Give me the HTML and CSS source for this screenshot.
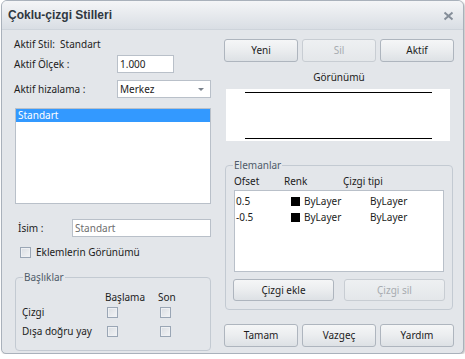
FILE: index.html
```html
<!DOCTYPE html>
<html lang="tr">
<head>
    <meta charset="UTF-8">
    <title>Çoklu-çizgi Stilleri</title>
    <link rel="stylesheet" href="styles.css">
</head>
<body>
    <div class="window">
        <div class="titlebar">
            <span class="title">Çoklu-çizgi Stilleri</span>
            <svg class="close" width="11" height="10" viewBox="0 0 11 10">
                <path d="M1.5 1.5 L9.5 8.5 M9.5 1.5 L1.5 8.5" stroke="#858e99" stroke-width="2"/>
            </svg>
        </div>
        <div class="content">
            <div class="left">
                <div class="stil">Aktif Stil:&nbsp; Standart</div>
                <div class="row olcek">
                    <span class="label">Aktif Ölçek :</span>
                    <div class="field scale">1.000</div>
                </div>
                <div class="row hiza">
                    <span class="label">Aktif hizalama :</span>
                    <div class="field select">Merkez<span class="arrow"></span></div>
                </div>
                <div class="stylelist">
                    <div class="item selected">Standart</div>
                </div>
                <div class="row isim">
                    <span class="label">İsim :</span>
                    <div class="field name">Standart</div>
                </div>
                <div class="check-row">
                    <span class="check"></span>Eklemlerin Görünümü
                </div>
                <fieldset class="group caps">
                    <legend>Başlıklar</legend>
                    <div class="caps-grid">
                        <span></span><span>Başlama</span><span>Son</span>
                        <span>Çizgi</span><span class="check"></span><span class="check"></span>
                        <span>Dışa doğru yay</span><span class="check"></span><span class="check"></span>
                    </div>
                </fieldset>
            </div>
            <div class="right">
                <div class="btn-row three">
                    <button class="btn">Yeni</button>
                    <button class="btn" disabled>Sil</button>
                    <button class="btn">Aktif</button>
                </div>
                <div class="preview-title">Görünümü</div>
                <div class="preview">
                    <div class="pline"></div>
                    <div class="pline"></div>
                </div>
                <fieldset class="group elements">
                    <legend>Elemanlar</legend>
                    <div class="cols head">
                        <span>Ofset</span><span>Renk</span><span>Çizgi tipi</span>
                    </div>
                    <div class="elist">
                        <div class="cols">
                            <span>0.5</span><span><i class="swatch"></i>ByLayer</span><span>ByLayer</span>
                        </div>
                        <div class="cols">
                            <span>-0.5</span><span><i class="swatch"></i>ByLayer</span><span>ByLayer</span>
                        </div>
                    </div>
                    <div class="btn-row two">
                        <button class="btn">Çizgi ekle</button>
                        <button class="btn" disabled>Çizgi sil</button>
                    </div>
                </fieldset>
                <div class="btn-row three bottom">
                    <button class="btn">Tamam</button>
                    <button class="btn">Vazgeç</button>
                    <button class="btn">Yardım</button>
                </div>
            </div>
        </div>
    </div>
</body>
</html>
```
FILE: styles.css
```css
body {
    margin: 0;
    background: #ffffff;
    font-family: "Noto Sans", "Liberation Sans", sans-serif;
    font-size: 10px;
    line-height: 14px;
    color: #1c1c1c;
}
.window {
    width: 461px;
    height: 352px;
    margin-left: 1px;
    border: 1px solid #a9b1bb;
    border-radius: 6px 6px 5px 5px;
    background: #e3e6ea;
    box-shadow: 1px 1px 2px rgba(0,0,0,0.25);
    overflow: hidden;
}
.titlebar {
    height: 28px;
    display: flex;
    align-items: center;
    justify-content: space-between;
    padding: 0 9px 0 6px;
    background: linear-gradient(#f4f5f7, #d9dee4);
    border-bottom: 1px solid #ced4db;
}
.title {
    font-family: "Liberation Sans", sans-serif;
    font-weight: bold;
    font-size: 12px;
    color: #303841;
}
.close {
    margin-top: 1px;
}
.content {
    display: flex;
    padding-left: 12px;
}
.left {
    width: 197px;
}
.right {
    width: 230px;
    margin-left: 13px;
}
.stil {
    margin-top: 7px;
}
.row {
    display: flex;
    align-items: center;
}
.label {
    width: 103px;
}
.field {
    height: 16px;
    line-height: 16px;
    border: 1px solid #b9c0c9;
    background: #fff;
    padding-left: 2px;
}
.olcek {
    margin-top: 4px;
}
.scale {
    width: 53px;
}
.hiza {
    margin-top: 7px;
}
.select {
    width: 90px;
    display: flex;
    justify-content: space-between;
    align-items: center;
}
.arrow {
    width: 0;
    height: 0;
    margin-right: 6px;
    border-left: 3px solid transparent;
    border-right: 3px solid transparent;
    border-top: 3px solid #7a828c;
}
.stylelist {
    margin-top: 10px;
    margin-left: 1px;
    height: 94px;
    border: 1px solid #b9c0c9;
    background: #fff;
}
.item {
    height: 13px;
    line-height: 13px;
    padding-left: 2px;
}
.selected {
    background: #3399ff;
    color: #fff;
}
.isim {
    margin-top: 15px;
}
.isim .label {
    width: 54px;
    padding-left: 4px;
}
.name {
    width: 135px;
    color: #6d6d6d;
}
.check-row {
    margin-top: 8px;
    display: flex;
    align-items: flex-start;
    padding-left: 6px;
}
.check-row .check {
    margin: 2px 5px 0 0;
}
.check {
    display: inline-block;
    box-sizing: border-box;
    width: 11px;
    height: 11px;
    border: 1px solid #9aa6b5;
    background: linear-gradient(135deg, #d9dde2, #f3f4f6);
    box-shadow: inset 0 0 0 1px #eef0f3;
}
.group {
    margin: 0;
    border: 1px solid #c3cad2;
    border-radius: 4px;
    padding: 0;
}
.group legend {
    color: #4f5b69;
    padding: 0 1px;
    margin-left: 7px;
    line-height: 12px;
}
.caps {
    margin-top: 12px;
    margin-left: 1px;
    padding-bottom: 9px;
}
.caps-grid {
    display: grid;
    grid-template-columns: 83px 53px auto;
    grid-template-rows: 12px 19px 19px;
    line-height: 13px;
    align-items: center;
    padding-left: 6px;
    margin-top: 8px;
}
.caps-grid .check {
    margin-left: 2px;
}
.btn-row {
    display: grid;
    gap: 4px;
}
.three {
    grid-template-columns: 74px 74px 74px;
    margin-top: 9px;
}
.btn {
    font-family: inherit;
    font-size: 10px;
    line-height: 13px;
    height: 23px;
    padding: 0;
    border: 1px solid #aeb5be;
    border-radius: 3px;
    background: linear-gradient(#f5f6f7 0%, #eceef0 45%, #dde1e5 100%);
    color: #1c1c1c;
}
.btn:disabled {
    color: #a7abb0;
    border-color: #c8cdd3;
    background: linear-gradient(#eef0f2, #e4e7ea);
}
.preview-title {
    text-align: center;
    margin-top: 8px;
}
.preview {
    margin-top: 5px;
    margin-left: 2px;
    width: 224px;
    height: 52px;
    background: #fff;
    display: flex;
    flex-direction: column;
    justify-content: space-between;
    align-items: center;
    padding: 3px 0 2px;
    box-sizing: border-box;
}
.pline {
    width: 187px;
    height: 1px;
    background: #000;
}
.elements {
    margin-top: 18px;
    margin-left: 1px;
    width: 227px;
    padding-bottom: 8px;
    box-sizing: border-box;
}
.cols {
    display: grid;
    grid-template-columns: 50px 59px auto;
    line-height: 16px;
}
.head {
    padding-left: 8px;
    margin-top: 2px;
}
.elist {
    margin: 1px 8px 0 8px;
    height: 78px;
    border: 1px solid #b9c0c9;
    background: #fff;
    padding: 2px 0 0 1px;
    width: 207px;
}
.elist .cols {
    grid-template-columns: 55px 79px auto;
}
.swatch {
    display: inline-block;
    width: 9px;
    height: 9px;
    background: #000;
    margin-right: 4px;
    vertical-align: -1px;
}
.two {
    grid-template-columns: 101px 101px;
    gap: 10px;
    margin: 7px 0 0 7px;
}
.two .btn {
    height: 22px;
    line-height: 14px;
}
.bottom {
    margin-top: 14px;
}
```
